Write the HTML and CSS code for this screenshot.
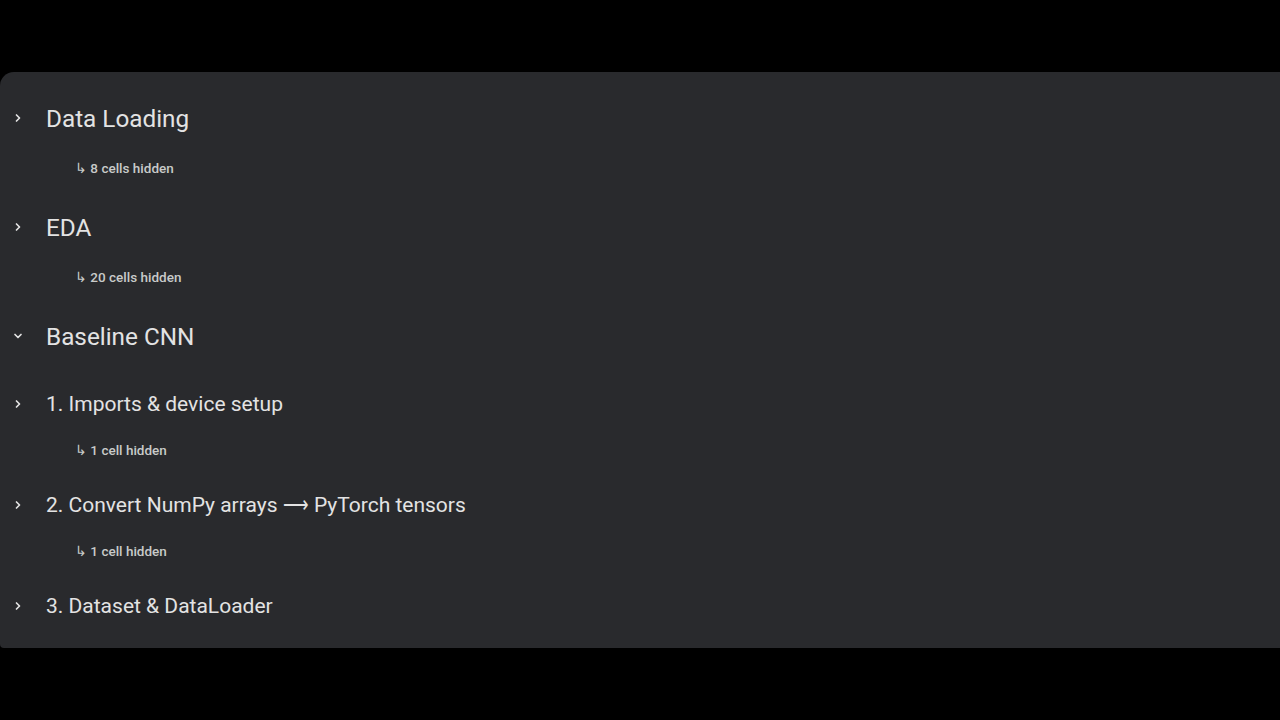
FILE: index.html
```html
<!DOCTYPE html>
<html>
<head>
<meta charset="utf-8">
<link rel="stylesheet" href="styles.css">
</head>
<body>
<div class="top"></div>
<main class="panel">
  <section class="sec h1 has-hidden">
    <div class="row"><span class="chev"><svg viewBox="0 0 10 10" width="10" height="10"><path d="M3.5 2 L6.5 5 L3.5 8" /></svg></span><span class="title">Data Loading</span></div>
    <div class="hidden">↳ 8 cells hidden</div>
  </section>
  <section class="sec h1 has-hidden">
    <div class="row"><span class="chev"><svg viewBox="0 0 10 10" width="10" height="10"><path d="M3.5 2 L6.5 5 L3.5 8" /></svg></span><span class="title">EDA</span></div>
    <div class="hidden">↳ 20 cells hidden</div>
  </section>
  <section class="sec h1 open">
    <div class="row"><span class="chev"><svg viewBox="0 0 10 10" width="10" height="10"><path d="M2 3.5 L5 6.5 L8 3.5" /></svg></span><span class="title">Baseline CNN</span></div>
  </section>
  <section class="sec h2 has-hidden">
    <div class="row"><span class="chev"><svg viewBox="0 0 10 10" width="10" height="10"><path d="M3.5 2 L6.5 5 L3.5 8" /></svg></span><span class="title">1. Imports &amp; device setup</span></div>
    <div class="hidden">↳ 1 cell hidden</div>
  </section>
  <section class="sec h2 has-hidden">
    <div class="row"><span class="chev"><svg viewBox="0 0 10 10" width="10" height="10"><path d="M3.5 2 L6.5 5 L3.5 8" /></svg></span><span class="title">2. Convert NumPy arrays <span class="arrow">⟶</span> PyTorch tensors</span></div>
    <div class="hidden">↳ 1 cell hidden</div>
  </section>
  <section class="sec h2">
    <div class="row"><span class="chev"><svg viewBox="0 0 10 10" width="10" height="10"><path d="M3.5 2 L6.5 5 L3.5 8" /></svg></span><span class="title">3. Dataset &amp; DataLoader</span></div>
  </section>
</main>
</body>
</html>
```
FILE: styles.css
```css
html, body {
  margin: 0;
  padding: 0;
  background: #000;
  width: 1280px;
  height: 720px;
  overflow: hidden;
  font-family: Roboto, "Noto Sans", "Liberation Sans", sans-serif;
}
.top {
  height: 72px;
}
.panel {
  height: 576px;
  background: #292a2d;
  border-top-left-radius: 14px;
  border-bottom-left-radius: 4px;
  padding-top: 22px;
  box-sizing: border-box;
  overflow: hidden;
  display: flex;
  flex-direction: column;
}
.sec {
  display: flex;
  flex-direction: column;
}
.row {
  display: flex;
  align-items: center;
}
.chev {
  width: 36px;
  display: flex;
  justify-content: center;
  margin-right: 10px;
}
.chev svg path {
  fill: none;
  stroke: #e3e3e3;
  stroke-width: 1.7;
  stroke-linecap: round;
  stroke-linejoin: round;
}
.title {
  color: #e3e3e3;
  font-weight: 400;
}
.h1 .row {
  height: 48px;
  font-size: 24.3px;
}
.h2 .row {
  height: 40px;
  font-size: 21px;
}
.arrow {
  display: inline-block;
  transform: scaleX(0.85);
  margin: 0 -2px;
}
.h1.has-hidden {
  margin-bottom: 25px;
}
.h1.open {
  margin-bottom: 24px;
}
.h2.has-hidden {
  margin-bottom: 25px;
}
.hidden {
  margin-top: 16px;
  height: 20px;
  line-height: 20px;
  padding-left: 75px;
  font-size: 13.5px;
  font-weight: 500;
  color: #c8cac9;
}
```
